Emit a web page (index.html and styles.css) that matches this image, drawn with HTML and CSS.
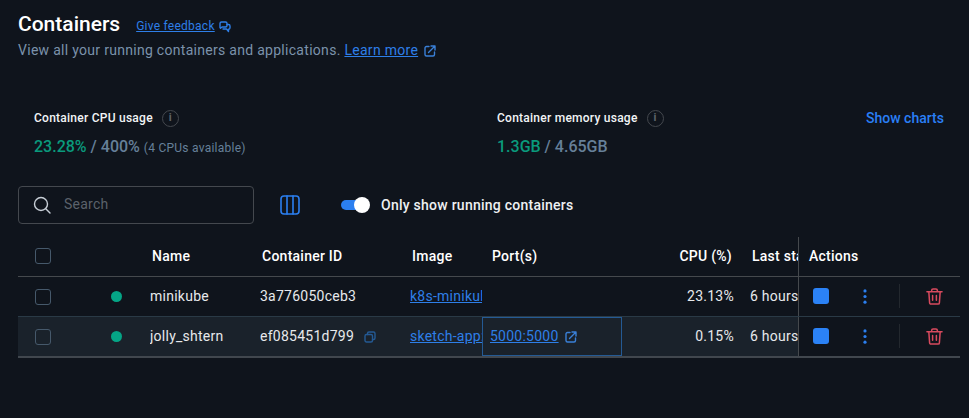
FILE: index.html
```html
<!DOCTYPE html>
<html>
<head>
  <title>Containers</title>
  <link rel="stylesheet" href="styles.css">
</head>
<body>

  <div class="title-row">
    <h1>Containers</h1>
    <a class="feedback" href="#">Give feedback</a>
    <svg class="feedback-icon" viewBox="0 0 12 12"><path d="M1 2.500a1.500 1.500 0 0 1 1.500-1.500h4A1.500 1.500 0 0 1 8 2.500v2A1.500 1.500 0 0 1 6.500 6H3L1.500 7.300 1 6.500z"/><path d="M4 8h3.500L9.500 10.500V8.300A1.500 1.500 0 0 0 11 7V5a1.500 1.500 0 0 0-1.500-1.500H8"/></svg>
  </div>
  <p class="subtitle">View all your running containers and applications. <a href="#">Learn more</a>
    <svg class="ext-icon" viewBox="0 0 12 12"><path d="M5 1.500H2.500a1.500 1.500 0 0 0-1.500 1.500v6.500A1.500 1.500 0 0 0 2.500 11H9a1.500 1.500 0 0 0 1.500-1.500V7"/><path d="M4.500 7.500 11 1M7 1h4v4"/></svg>
  </p>

  <div class="stats">
    <div class="stat stat-cpu">
      <div class="stat-label">Container CPU usage <span class="info">i</span></div>
      <div class="stat-value"><span class="used">23.28%</span> / 400% <small>(4 CPUs available)</small></div>
    </div>
    <div class="stat stat-mem">
      <div class="stat-label">Container memory usage <span class="info">i</span></div>
      <div class="stat-value"><span class="used">1.3GB</span> / 4.65GB</div>
    </div>
    <a class="show-charts" href="#">Show charts</a>
  </div>

  <div class="toolbar">
    <div class="search">
      <svg viewBox="0 0 18 18"><circle cx="8" cy="8" r="6.500"/><path d="m13 13 4 4"/></svg>
      <span>Search</span>
    </div>
    <svg class="columns-icon" viewBox="0 0 20 20"><rect x="1" y="1" width="18" height="18" rx="3"/><path d="M7 1v18M13 1v18"/></svg>
    <div class="toggle"><span class="knob"></span></div>
    <span class="toggle-label">Only show running containers</span>
  </div>

  <div class="table">
    <div class="row head">
      <div class="cell"><span class="check"></span></div>
      <div class="cell"></div>
      <div class="cell pad">Name</div>
      <div class="cell pad">Container ID</div>
      <div class="cell pad">Image</div>
      <div class="cell port head-port">Port(s)</div>
      <div class="cell num head-num">CPU (%)</div>
      <div class="cell last head-last"><span class="clip-text">Last started</span></div>
      <div class="cell actions">Actions</div>
    </div>
    <div class="row">
      <div class="cell"><span class="check"></span></div>
      <div class="cell"><span class="dot"></span></div>
      <div class="cell">minikube</div>
      <div class="cell">3a776050ceb3</div>
      <div class="cell clip"><a href="#">k8s-minikube/kicbase</a></div>
      <div class="cell port"></div>
      <div class="cell num">23.13%</div>
      <div class="cell last"><span class="clip-text">6 hours ago</span></div>
      <div class="cell actions">
        <span class="stop"></span>
        <svg class="dots" viewBox="0 0 4 16"><circle cx="2" cy="2" r="1.700"/><circle cx="2" cy="8" r="1.700"/><circle cx="2" cy="14" r="1.700"/></svg>
        <span class="divider"></span>
        <svg class="trash" viewBox="0 0 18 18"><path d="M1 4h16M6 4V2.500A1.500 1.500 0 0 1 7.500 1h3A1.500 1.500 0 0 1 12 2.500V4M3 4l.8 11.500A1.500 1.500 0 0 0 5.300 17h7.400a1.500 1.500 0 0 0 1.500-1.500L15 4M7 8v5M11 8v5"/></svg>
      </div>
    </div>
    <div class="row hover">
      <div class="cell"><span class="check"></span></div>
      <div class="cell"><span class="dot"></span></div>
      <div class="cell">jolly_shtern</div>
      <div class="cell">ef085451d799
        <svg class="copy" viewBox="0 0 12 12"><rect x="1" y="3.500" width="7.500" height="7.500" rx="1.500"/><path d="M3.500 3.500V2.500A1.500 1.500 0 0 1 5 1h4.500A1.500 1.500 0 0 1 11 2.500V7a1.500 1.500 0 0 1-1.500 1.500h-1"/></svg>
      </div>
      <div class="cell clip"><a href="#">sketch-app:latest</a></div>
      <div class="cell port focused"><a href="#">5000:5000</a>
        <svg class="ext-icon" viewBox="0 0 12 12"><path d="M5 1.500H2.500a1.500 1.500 0 0 0-1.500 1.500v6.500A1.500 1.500 0 0 0 2.500 11H9a1.500 1.500 0 0 0 1.500-1.500V7"/><path d="M4.500 7.500 11 1M7 1h4v4"/></svg>
      </div>
      <div class="cell num">0.15%</div>
      <div class="cell last"><span class="clip-text">6 hours ago</span></div>
      <div class="cell actions">
        <span class="stop"></span>
        <svg class="dots" viewBox="0 0 4 16"><circle cx="2" cy="2" r="1.700"/><circle cx="2" cy="8" r="1.700"/><circle cx="2" cy="14" r="1.700"/></svg>
        <span class="divider"></span>
        <svg class="trash" viewBox="0 0 18 18"><path d="M1 4h16M6 4V2.500A1.500 1.500 0 0 1 7.500 1h3A1.500 1.500 0 0 1 12 2.500V4M3 4l.8 11.500A1.500 1.500 0 0 0 5.300 17h7.400a1.500 1.500 0 0 0 1.500-1.500L15 4M7 8v5M11 8v5"/></svg>
      </div>
    </div>
  </div>

</body>
</html>
```

FILE: styles.css
```css
body {
  margin: 0;
  height: 418px;
  overflow: hidden;
  padding: 12px 9px 0 18px;
  box-sizing: border-box;
  background: #0f141c;
  color: #e7e9ec;
  font-family: Roboto, "Liberation Sans", sans-serif;
  font-size: 14px;
  letter-spacing: .25px;
}
a {
  color: #2e7fe8;
}
svg {
  fill: none;
  stroke-linecap: round;
  stroke-linejoin: round;
}

.title-row {
  display: flex;
  align-items: center;
  height: 24px;
}
h1 {
  margin: 0;
  font-size: 21px;
  font-weight: 500;
  letter-spacing: 0;
  color: #fff;
}
.feedback {
  margin-left: 16px;
  margin-top: 4px;
  font-size: 12px;
  color: #2e7fe8;
}
.feedback-icon {
  width: 12px;
  height: 12px;
  margin: 5px 0 0 4px;
  stroke: #2e7fe8;
  stroke-width: 1.4;
}
.subtitle {
  margin: 4px 0 0;
  font-size: 14px;
  line-height: 20px;
  letter-spacing: .29px;
  color: #7b92ab;
}
.ext-icon {
  width: 12px;
  height: 12px;
  margin-left: 2px;
  vertical-align: -2px;
  stroke: #3a80d8;
  stroke-width: 1.4;
}

.stats {
  display: flex;
  margin-top: 48px;
  height: 52px;
}
.stat-cpu {
  width: 463px;
  padding-left: 16px;
}
.stat-mem {
  width: 369px;
}
.stat-label {
  display: flex;
  align-items: center;
  height: 20px;
  font-size: 12px;
  font-weight: 500;
  color: #f2f4f6;
}
.info {
  display: inline-block;
  width: 17px;
  height: 17px;
  margin-left: 9px;
  box-sizing: border-box;
  border: 1.5px solid #44484e;
  border-radius: 50%;
  color: #5f646b;
  font-size: 11px;
  font-weight: 700;
  line-height: 14px;
  text-align: center;
}
.stat-value {
  margin-top: 9px;
  font-size: 16px;
  font-weight: 500;
  line-height: 20px;
  letter-spacing: 0;
  color: #668099;
}
.stat-value small {
  font-size: 12px;
  font-weight: 400;
  letter-spacing: .25px;
}
.used {
  color: #0a9a7c;
}
.show-charts {
  font-size: 14px;
  font-weight: 500;
  line-height: 20px;
  letter-spacing: 0;
  text-decoration: none;
  color: #2a7ff5;
}

.toolbar {
  display: flex;
  align-items: center;
  margin-top: 26px;
  height: 38px;
}
.search {
  display: flex;
  align-items: center;
  width: 236px;
  height: 38px;
  box-sizing: border-box;
  padding-left: 14px;
  border: 1px solid #44484e;
  border-radius: 4px;
  color: #5b626b;
}
.search svg {
  width: 18px;
  height: 18px;
  margin-right: 13px;
  stroke: #c7ced6;
  stroke-width: 1.4;
}
.search span {
  margin-bottom: 2px;
}
.columns-icon {
  width: 20px;
  height: 20px;
  margin-left: 26px;
  stroke: #2b7ff0;
  stroke-width: 1.6;
}
.toggle {
  position: relative;
  width: 26px;
  height: 10px;
  margin-left: 41px;
  border-radius: 5px;
  background: #2b7ff0;
}
.knob {
  position: absolute;
  top: -3px;
  right: -3px;
  width: 16px;
  height: 16px;
  border-radius: 50%;
  background: #fff;
}
.toggle-label {
  margin-left: 14px;
  font-weight: 500;
  color: #eef0f2;
}

.table {
  margin-top: 13px;
  width: 942px;
  border-bottom: 2px solid #41474e;
}
.row {
  display: grid;
  grid-template-columns: 82px 50px 110px 150px 72px 140px 120px 56px 162px;
  height: 40px;
  border-bottom: 1px solid #2a3a46;
  box-sizing: border-box;
}
.row:last-child {
  height: 39px;
  border-bottom: 0;
}
.head {
  border-bottom: 1px solid #45494d;
  font-weight: 500;
  color: #fff;
}
.cell {
  display: flex;
  align-items: center;
  padding-bottom: 2px;
  box-sizing: border-box;
  white-space: nowrap;
  overflow: hidden;
}
.pad {
  padding-left: 2px;
}
.hover .cell:not(.actions) {
  background: #1a222b;
}
.check {
  width: 16px;
  height: 16px;
  margin-left: 17px;
  box-sizing: border-box;
  border: 1.5px solid #46596b;
  border-radius: 3px;
}
.row:not(.head) .check,
.dot {
  margin-top: 2px;
}
.dot {
  width: 11px;
  height: 11px;
  margin-left: 11px;
  border-radius: 50%;
  background: #05a586;
}
.clip a {
  display: block;
}
.clip-text {
  display: block;
  overflow: hidden;
}
.port {
  padding-left: 8px;
}
.head-port {
  padding-left: 10px;
}
.focused {
  padding-left: 7px;
  border: 1px solid #245a94;
}
.focused .ext-icon {
  margin: 2px 0 0 6px;
}
.num {
  justify-content: flex-end;
  padding-right: 8px;
}
.head-num {
  padding-right: 10px;
}
.last {
  padding-left: 8px;
}
.head-last {
  padding-left: 10px;
}
.actions {
  padding-left: 10px;
  border-left: 1px solid #45494d;
}
.row:not(.head) .actions {
  padding-bottom: 1px;
}
.copy {
  width: 12px;
  height: 12px;
  margin: 2px 0 0 10px;
  stroke: #245a94;
  stroke-width: 1.4;
}
.stop {
  width: 16px;
  height: 16px;
  margin-left: 4px;
  border-radius: 3px;
  background: #2b82f6;
}
.dots {
  width: 4px;
  height: 15px;
  margin-left: 34px;
  fill: #2b7ff0;
}
.divider {
  width: 1px;
  height: 24px;
  margin-left: 32px;
  background: #23282e;
}
.trash {
  width: 17px;
  height: 17px;
  margin-left: 26px;
  stroke: #d84a5e;
  stroke-width: 1.6;
}
```
